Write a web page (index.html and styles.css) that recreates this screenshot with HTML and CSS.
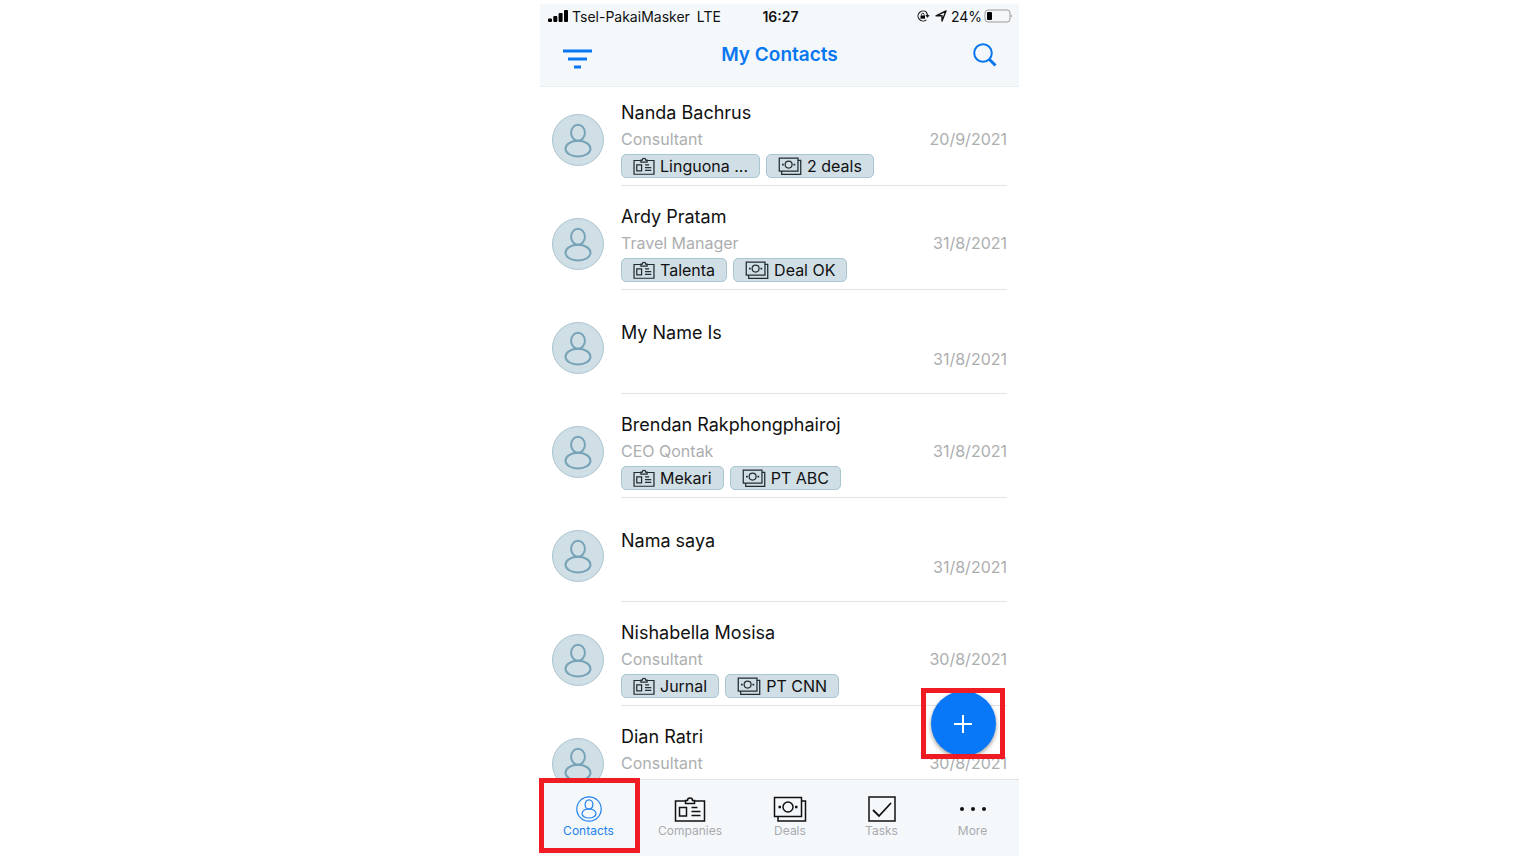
FILE: index.html
```html
<!DOCTYPE html>
<html lang="en">
<head>
<meta charset="utf-8">
<meta name="viewport" content="width=device-width, initial-scale=1">
<title>My Contacts</title>
<link rel="stylesheet" href="styles.css">
</head>
<body>
<svg class="sprite" aria-hidden="true">
  <symbol id="person" viewBox="0 0 52 52">
    <ellipse cx="26" cy="18.500" rx="7.200" ry="8.300"/>
    <ellipse cx="26" cy="35" rx="13" ry="8.200"/>
  </symbol>
  <symbol id="company" viewBox="0 0 32 26">
    <path d="M11.500 5H1.500V25H30.500V5H20.500M11.500 4.500V7.500H20.500V4.500H18.500A2.500 2.500 0 0 0 13.500 4.500ZM5.500 11.500H12.500V20H5.500ZM17.500 11.500H23.500M17.500 15.500H26.500M17.500 19.500H26.500"/>
  </symbol>
  <symbol id="deal" viewBox="0 0 34 26">
    <path d="M1.500 1.500H28.500V20.500H1.500ZM28.500 5H32.500V25H5V20.500"/>
    <circle cx="15" cy="11" r="5"/>
    <path d="M5.500 11H8M22 11H24.500" stroke-width="2.500"/>
  </symbol>
</svg>
<div class="phone">
  <header class="header">
    <div class="status">
      <div class="status-left">
        <svg class="signal" viewBox="0 0 20 12"><rect y="8.500" width="4" height="3.500" rx="1"/><rect x="5.300" y="6" width="4" height="6" rx="1"/><rect x="10.600" y="3" width="4" height="9" rx="1"/><rect x="16" width="4" height="12" rx="1"/></svg>
        <span>Tsel-PakaiMasker</span><span class="network">LTE</span>
      </div>
      <time class="clock">16:27</time>
      <div class="status-right">
        <svg class="lock" viewBox="0 0 14 12"><path d="M10.300 2.200A5 5 0 1 0 10.300 9.800M10.300 2.200Q11.500 3.800 11.500 6M9.800 5L11.500 7L13.200 5" fill="none" stroke="currentColor" stroke-width="1.100"/><path d="M4.500 5.500h4.500v3.200h-4.500z"/><path d="M5.500 5.500V4.500a1.250 1.250 0 0 1 2.500 0V5.500" fill="none" stroke="currentColor" stroke-width=".900"/></svg>
        <svg class="arrow" viewBox="0 0 12 12"><path d="M1 5.800L11 1L7 11V5.800Z" fill="none" stroke="currentColor" stroke-width="1.400" stroke-linejoin="round"/></svg>
        <span>24%</span>
        <svg class="battery" viewBox="0 0 29 14"><rect x="1" y="1" width="25" height="12" rx="3" fill="none" stroke="#999"/><rect x="3" y="3" width="5" height="8" rx="1"/><path d="M27.200 5q1.800 2 0 4z" fill="#999"/></svg>
      </div>
    </div>
    <div class="titlebar">
      <button class="icon-button" aria-label="Filter"><svg class="filter" viewBox="0 0 30 20"><path d="M1 2H30M6 10H25M12 18H19"/></svg></button>
      <h1>My Contacts</h1>
      <button class="icon-button" aria-label="Search"><svg class="search" viewBox="0 0 24 24"><circle cx="10" cy="10" r="8.800"/><path d="M16.500 16.500L22.500 22.500" stroke-width="3"/></svg></button>
    </div>
  </header>

  <main class="list-area">
    <ul class="contacts">
      <li class="contact">
        <svg class="avatar"><use href="#person"/></svg>
        <div class="details">
          <h2>Nanda Bachrus</h2>
          <p><span>Consultant</span><time>20/9/2021</time></p>
          <div class="chips"><button class="chip"><svg class="chip-company"><use href="#company"/></svg>Linguona ...</button><button class="chip"><svg class="chip-deal"><use href="#deal"/></svg>2 deals</button></div>
        </div>
      </li>
      <li class="contact">
        <svg class="avatar"><use href="#person"/></svg>
        <div class="details">
          <h2>Ardy Pratam</h2>
          <p><span>Travel Manager</span><time>31/8/2021</time></p>
          <div class="chips"><button class="chip"><svg class="chip-company"><use href="#company"/></svg>Talenta</button><button class="chip"><svg class="chip-deal"><use href="#deal"/></svg>Deal OK</button></div>
        </div>
      </li>
      <li class="contact">
        <svg class="avatar"><use href="#person"/></svg>
        <div class="details plain">
          <h2>My Name Is</h2>
          <p><span></span><time>31/8/2021</time></p>
        </div>
      </li>
      <li class="contact">
        <svg class="avatar"><use href="#person"/></svg>
        <div class="details">
          <h2>Brendan Rakphongphairoj</h2>
          <p><span>CEO Qontak</span><time>31/8/2021</time></p>
          <div class="chips"><button class="chip"><svg class="chip-company"><use href="#company"/></svg>Mekari</button><button class="chip"><svg class="chip-deal"><use href="#deal"/></svg>PT ABC</button></div>
        </div>
      </li>
      <li class="contact">
        <svg class="avatar"><use href="#person"/></svg>
        <div class="details plain">
          <h2>Nama saya</h2>
          <p><span></span><time>31/8/2021</time></p>
        </div>
      </li>
      <li class="contact">
        <svg class="avatar"><use href="#person"/></svg>
        <div class="details">
          <h2>Nishabella Mosisa</h2>
          <p><span>Consultant</span><time>30/8/2021</time></p>
          <div class="chips"><button class="chip"><svg class="chip-company"><use href="#company"/></svg>Jurnal</button><button class="chip"><svg class="chip-deal"><use href="#deal"/></svg>PT CNN</button></div>
        </div>
      </li>
      <li class="contact">
        <svg class="avatar"><use href="#person"/></svg>
        <div class="details">
          <h2>Dian Ratri</h2>
          <p><span>Consultant</span><time>30/8/2021</time></p>
          <div class="chips"></div>
        </div>
      </li>
    </ul>
    <div class="add-marker">
      <button class="add" aria-label="Add contact"><svg viewBox="0 0 18 18"><path d="M9 0V18M0 9H18"/></svg></button>
    </div>
  </main>

  <nav class="tabs">
    <a href="#contacts" class="tab tab-contacts" aria-current="page"><svg viewBox="0 0 26 26"><circle cx="13" cy="13" r="12.200"/><ellipse cx="13" cy="8.500" rx="3.900" ry="4.700"/><ellipse cx="13" cy="17.500" rx="7" ry="4.500"/></svg>Contacts</a>
    <a href="#companies" class="tab tab-companies"><svg><use href="#company"/></svg>Companies</a>
    <a href="#deals" class="tab tab-deals"><svg><use href="#deal"/></svg>Deals</a>
    <a href="#tasks" class="tab tab-tasks"><svg viewBox="0 0 28 26"><path d="M1 1H27V25H1Z"/><path d="M5 14L11 20L23 7" stroke-width="1.800"/></svg>Tasks</a>
    <a href="#more" class="tab tab-more"><svg viewBox="0 0 28 26"><g fill="currentColor" stroke="none"><circle cx="3" cy="13" r="2"/><circle cx="14" cy="13" r="2"/><circle cx="25" cy="13" r="2"/></g></svg>More</a>
  </nav>
</div>
</body>
</html>
```

FILE: styles.css
```css
*, *::after { box-sizing: border-box; }
body {
  margin: 0;
  padding: 4px 0 11px 22px;
  height: 100vh;
  background: #fff;
  color: #111;
  font-family: Inter, "Liberation Sans", sans-serif;
}
button { font: inherit; color: inherit; border: 0; padding: 0; background: none; cursor: pointer; }
h1, h2, p, ul { margin: 0; padding: 0; font-weight: 400; }
svg { display: block; flex: none; }
.sprite { position: absolute; width: 0; height: 0; }

.phone {
  display: flex;
  flex-direction: column;
  width: 100%;
  max-width: 479px;
  height: 100%;
  margin: 0 auto;
}

.header {
  padding-bottom: 12px;
  background: #f4f8fb;
  border-bottom: 1px solid #ebf0f3;
}
.status {
  display: grid;
  grid-template-columns: 1fr auto 1fr;
  align-items: center;
  height: 24px;
  padding: 0 6px 0 8px;
  font-size: 14px;
}
.status-left, .status-right { display: flex; align-items: center; gap: 4px; }
.status-right { justify-content: flex-end; gap: 2px; }
.network { margin-left: 3px; }
.clock { font-weight: 600; }
.signal { width: 20px; height: 12px; }
.lock { width: 14px; height: 12px; margin-right: 3px; }
.arrow { width: 12px; height: 12px; margin-right: 2px; }
.battery { width: 29px; height: 14px; }

.titlebar {
  display: grid;
  grid-template-columns: 1fr auto 1fr;
  align-items: center;
  height: 46px;
  padding: 8px 22px 0;
  color: #0877ef;
}
.icon-button { justify-self: start; }
.icon-button:last-child { justify-self: end; }
.titlebar h1 { font-size: 19px; font-weight: 600; line-height: 28px; }
.titlebar svg { fill: none; stroke: currentColor; }
.filter { width: 30px; height: 20px; margin-top: 8px; stroke-width: 3; }
.search { width: 24px; height: 24px; stroke-width: 2; }

.list-area { position: relative; flex: 1; min-height: 0; }
.contacts { height: 100%; overflow: hidden; list-style: none; }
.contact {
  display: flex;
  align-items: flex-end;
  gap: 17px;
  height: 104px;
  padding: 0 12px;
}
.contact:first-child { height: 99px; }
.avatar {
  width: 52px;
  height: 52px;
  margin-bottom: 20px;
  border: 1px solid #a9c6d3;
  border-radius: 50%;
  background: #d0dee6;
  fill: none;
  stroke: #75a2b6;
  stroke-width: 2;
}
.details { flex: 1; min-width: 0; padding-bottom: 7px; border-bottom: 1px solid #e2e5e7; }
.details.plain { padding-bottom: 19px; }
.details h2 { font-size: 18px; line-height: 27px; }
.details p {
  display: flex;
  justify-content: space-between;
  margin-bottom: 1px;
  color: #acaeb0;
  font-size: 16px;
  line-height: 27px;
}
.chips { display: flex; gap: 6px; height: 24px; }
.chip {
  display: flex;
  align-items: center;
  gap: 5px;
  height: 24px;
  padding: 0 11px;
  border: 1px solid #a9c6d1;
  border-radius: 5px;
  background: #d0dee6;
  font-size: 16px;
  line-height: 22px;
}
.chip svg { height: 18px; fill: none; stroke: #222b30; stroke-width: 1.8; }
.chip-company { width: 22px; }
.chip-deal { width: 24px; }

.add-marker {
  position: absolute;
  right: 14px;
  bottom: 20px;
  width: 84px;
  height: 71px;
  border: 5px solid #ef1c24;
  display: grid;
  grid-template-rows: 100%;
  place-items: center;
  overflow: hidden;
}
.add {
  display: grid;
  place-items: center;
  width: 65px;
  height: 65px;
  border-radius: 50%;
  background: #0877f8;
  box-shadow: 0 2px 4px #0006;
}
.add svg { width: 18px; height: 18px; stroke: #fff; stroke-width: 2; }

.tabs {
  position: relative;
  display: flex;
  height: 77px;
  background: #f4f8fb;
  border-top: 1px solid #e2e5e7;
}
.tab {
  display: flex;
  flex-direction: column;
  align-items: center;
  gap: 1px;
  min-width: 0;
  padding-top: 16px;
  color: #a9abad;
  font-size: 12px;
  line-height: 16px;
  text-decoration: none;
}
.tab svg { height: 26px; color: #111; fill: none; stroke: currentColor; stroke-width: 1.5; }
.tab-contacts { flex: 97; color: #2381ed; }
.tab-contacts svg { width: 26px; color: inherit; stroke-width: 1.2; }
.tab-contacts::after {
  content: "";
  position: absolute;
  left: -1px;
  top: -2px;
  width: 101px;
  height: 75px;
  border: 5px solid #ef1c24;
}
.tab-companies { flex: 106; }
.tab-companies svg { width: 32px; }
.tab-deals { flex: 94; }
.tab-deals svg { width: 34px; }
.tab-tasks { flex: 89; }
.tab-tasks svg { width: 28px; }
.tab-more { flex: 93; }
.tab-more svg { width: 28px; }
```
